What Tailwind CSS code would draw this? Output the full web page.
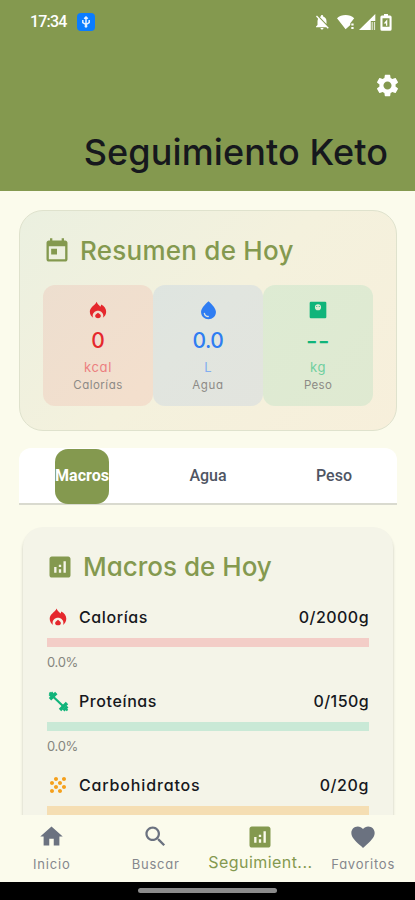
<!DOCTYPE html>
<html lang="es">
<head>
    <meta charset="UTF-8">
    <meta name="viewport" content="width=device-width, initial-scale=1.0">
    <title>Seguimiento Keto</title>

    <!-- Tailwind CSS -->
    <script src="https://cdn.jsdelivr.net/npm/@tailwindcss/browser@4"></script>

    <style>
        body {
            font-family: 'Inter', sans-serif;
            font-feature-settings: "cv11";
        }
    </style>
</head>
<body class="bg-[#fbfbec] text-[#16181d]">

    <div class="w-[415px] h-[900px] overflow-hidden flex flex-col">

        <!-- Cabecera -->
        <header class="h-[191px] shrink-0 bg-[#84994f] flex flex-col">
            <!-- Barra de estado -->
            <div class="h-11 pl-[30px] pr-[23px] flex items-center text-white font-['Roboto']">
                <span class="text-[16px] font-medium tracking-[-0.8px]">17:34</span>
                <span class="ml-[10px] size-[18px] rounded-[4px] bg-[#0a7cff] flex items-center justify-center">
                    <svg class="size-[14px]" viewBox="0 0 14 14" fill="none" stroke="#e6f1ff" stroke-width="1.5">
                        <path d="M7 1.500v10.500M3.800 5v2.500l3.200 2.200 3.200-2.200V5M5.200 3.800 7 2l1.800 1.800"/>
                        <circle cx="7" cy="11.300" r=".7"/>
                    </svg>
                </span>
                <div class="ml-auto flex items-center">
                    <svg class="w-[18px] h-[18px]" viewBox="0 0 24 24" fill="currentColor">
                        <path d="M20 18.690 7.840 6.140 5.270 3.490 4 4.760l2.800 2.800v.01c-.52.990-.8 2.160-.8 3.420v5l-2 2v1h13.730l2 2L21 19.720l-1-1.030zM12 22c1.110 0 2-.89 2-2h-4c0 1.110.89 2 2 2zm6-7.320V11c0-3.080-1.640-5.640-4.500-6.320V4c0-.83-.67-1.500-1.500-1.500s-1.500.67-1.500 1.500v.68c-.15.030-.29.080-.42.120-.1.030-.2.070-.3.110h-.01c-.01 0-.01 0-.02.010-.23.090-.46.200-.68.310L18 14.680z"/>
                    </svg>
                    <svg class="ml-[6px] w-[18px] h-[16px]" viewBox="0 0 18 16" fill="currentColor">
                        <path d="M0 4.200C2.300 2.200 5.300 1 8.600 1s6.300 1.200 8.600 3.200L13.300 9.300V11L8.600 15.200z"/>
                        <path d="M14.300 9.600h2.300v1.900h-2.300zM14.300 13h2.300v1.900h-2.300z"/>
                    </svg>
                    <svg class="ml-[4px] w-[17px] h-[16px]" viewBox="0 0 17 16" fill="currentColor">
                        <path d="M16.300 0v7h-4.500v9H0z"/>
                        <path d="M12.600 8h1.200v8h-1.200zM14.900 8h1.200v8h-1.200z" opacity=".75"/>
                    </svg>
                    <svg class="ml-[4px] w-[12px] h-[17px]" viewBox="0 0 12 17" fill="currentColor">
                        <path fill-rule="evenodd" d="M4 0h4v1.500h2A1.600 1.600 0 0 1 11.600 3v12.200A1.600 1.600 0 0 1 10 16.800H2A1.600 1.600 0 0 1 .4 15.200V3A1.600 1.600 0 0 1 2 1.500h2zM2.500 4.300v8.400h7V4.300z"/>
                        <path d="M7.300 5.200v6.600H6V9.400H3.700L7.300 5.200z"/>
                    </svg>
                </div>
            </div>
            <!-- Ajustes -->
            <div class="h-[82px] pr-[14px] flex justify-end items-center">
                <svg class="size-[27px] text-white" viewBox="0 0 24 24" fill="currentColor">
                    <path d="M19.140 12.940c.04-.3.060-.61.060-.94 0-.32-.02-.64-.07-.94l2.030-1.580c.18-.14.230-.41.120-.61l-1.920-3.320c-.12-.22-.37-.29-.59-.22l-2.390.96c-.5-.38-1.030-.7-1.620-.94l-.36-2.540c-.04-.24-.24-.41-.48-.41h-3.840c-.24 0-.43.170-.47.410l-.36 2.540c-.59.240-1.130.570-1.620.940l-2.390-.96c-.22-.08-.47 0-.59.220L2.740 8.870c-.12.210-.08.470.12.610l2.030 1.580c-.05.3-.09.630-.09.940s.02.640.070.940l-2.030 1.580c-.18.140-.23.410-.12.610l1.920 3.320c.12.220.370.290.590.220l2.390-.96c.5.380 1.030.7 1.620.940l.36 2.540c.05.240.240.410.480.410h3.840c.24 0 .44-.17.470-.41l.36-2.540c.59-.24 1.130-.56 1.620-.94l2.390.96c.22.080.470 0 .59-.22l1.920-3.320c.12-.22.070-.47-.12-.61l-2.010-1.580zM12 15.600c-1.980 0-3.600-1.620-3.600-3.600s1.620-3.600 3.600-3.600 3.600 1.620 3.600 3.600-1.620 3.600-3.600 3.600z"/>
                </svg>
            </div>
            <h1 class="pr-[27px] text-right text-[36px] leading-[52px] font-[450] tracking-[0.1px] whitespace-nowrap">Seguimiento Keto</h1>
        </header>

        <main class="grow min-h-0 overflow-hidden pl-[19px] pr-[18px] pt-[19px]">

            <!-- Resumen del día -->
            <section class="h-[221px] rounded-[24px] border border-[#dfe2cd] bg-linear-135 from-[#ebf0e0] via-[#f4f1dd] to-[#f7efdb] px-[23px] pt-[22px]">
                <div class="flex items-center gap-[9px] text-[#84994f]">
                    <svg class="size-[28px]" viewBox="0 0 24 24" fill="currentColor">
                        <path d="M19 3h-1V1h-2v2H8V1H6v2H5c-1.110 0-1.990.9-1.990 2L3 19c0 1.100.89 2 2 2h14c1.100 0 2-.9 2-2V5c0-1.100-.9-2-2-2zm0 16H5V8h14v11zM7 10h5v5H7z"/>
                    </svg>
                    <h2 class="text-[26px] leading-[36px] font-[450] tracking-[0.25px] whitespace-nowrap">Resumen de Hoy</h2>
                </div>
                <div class="mt-[16px] grid grid-cols-3 text-center">
                    <div class="h-[121px] rounded-[12px] bg-[#ef4444]/10 flex flex-col items-center pt-[15px]">
                        <svg class="size-[20px] text-[#e5282d]" viewBox="0 0 24 24" fill="currentColor">
                            <path d="M10.500 2c.3 2.800 3 3.600 4.200 6 .7-.6 1-1.400 1-2.500 3.800 1.800 6.100 4.800 6.100 8.700 0 3-1.500 5.600-4 7.200.4-.7.6-1.500.6-2.400 0-3.300-3-6-6.400-6s-6.400 2.700-6.400 6c0 .9.2 1.700.6 2.400-2.500-1.600-4-4.200-4-7.200C2.200 8.500 7.800 7 10.500 2z"/>
                            <path d="m12 15.200 2.700 2.300c1.300 1.300.9 4.300-2.700 4.300s-4-3-2.700-4.300z"/>
                        </svg>
                        <span class="mt-[7px] text-[21px] leading-[28px] font-[450] text-[#e5282d]">0</span>
                        <span class="mt-[3px] text-[13px] leading-[18px] tracking-[0.6px] text-[#ec8080]">kcal</span>
                        <span class="text-[11.500px] leading-[18px] tracking-[0.5px] text-[#8d8a86]">Calorías</span>
                    </div>
                    <div class="h-[121px] rounded-[12px] bg-[#3b82f6]/10 flex flex-col items-center pt-[15px]">
                        <svg class="size-[21px] text-[#2f7df2]" viewBox="0 0 24 24" fill="currentColor">
                            <path d="M12 1.500c-5.330 4.550-8.500 8.980-8.500 12.300 0 4.980 4 8.200 8.500 8.200s8.500-3.220 8.500-8.200c0-3.320-3.170-7.750-8.500-12.300zM7.300 14.600c.37 0 .67.260.740.620.41 2.220 2.280 2.980 3.640 2.870.43-.02.790.320.790.750 0 .4-.32.730-.72.750-2.130.130-4.620-1.090-5.190-4.120-.08-.45.280-.87.740-.87z"/>
                        </svg>
                        <span class="mt-[6px] text-[21px] leading-[28px] font-[450] tracking-[-0.5px] text-[#2f7df2]">0.0</span>
                        <span class="mt-[3px] text-[13px] leading-[18px] text-[#82aef0]">L</span>
                        <span class="text-[11.500px] leading-[18px] tracking-[0.7px] text-[#8d8a86]">Agua</span>
                    </div>
                    <div class="h-[121px] rounded-[12px] bg-[#10b981]/10 flex flex-col items-center pt-[15px]">
                        <svg class="size-[20px] text-[#10b47a]" viewBox="0 0 24 24" fill="currentColor">
                            <path fill-rule="evenodd" d="M3.500 2h17A1.500 1.500 0 0 1 22 3.500v17a1.500 1.500 0 0 1-1.500 1.500h-17A1.500 1.500 0 0 1 2 20.500v-17A1.500 1.500 0 0 1 3.500 2zM12 5a3.700 3.700 0 1 0 0 7.400A3.700 3.700 0 0 0 12 5z"/>
                            <circle cx="10.500" cy="7.800" r=".7"/><circle cx="13.500" cy="7.800" r=".7"/>
                        </svg>
                        <span class="mt-[7px] text-[25px] leading-[28px] font-medium tracking-[0.5px] text-[#10b47a]">--</span>
                        <span class="mt-[3px] text-[13px] leading-[18px] tracking-[0.6px] text-[#6fcf9f]">kg</span>
                        <span class="text-[11.500px] leading-[18px] tracking-[0.3px] text-[#8d8a86]">Peso</span>
                    </div>
                </div>
            </section>

            <!-- Pestañas -->
            <nav class="mt-[17px] h-[57px] rounded-t-[12px] bg-white border-b-2 border-[#d9dacf] grid grid-cols-3 font-['Roboto'] text-[16px] text-[#4f5563]">
                <div class="flex justify-center">
                    <span class="mt-px w-[54px] h-[55px] rounded-[13px] bg-[#84994f] text-white font-bold flex items-center justify-center pb-px">Macros</span>
                </div>
                <div class="flex items-center justify-center font-medium">Agua</div>
                <div class="flex items-center justify-center font-medium">Peso</div>
            </nav>

            <!-- Macros del día -->
            <section class="mt-[22px] ml-[4px] mr-[4px] h-[400px] rounded-[20px] bg-[#f4f4e8] shadow-[0_3px_3px_rgba(0,0,0,0.22)] px-[24px] pt-[22px]">
                <div class="-ml-px flex items-center gap-[9px] text-[#84994f]">
                    <svg class="size-[28px]" viewBox="0 0 24 24" fill="currentColor">
                        <path d="M19 3H5c-1.100 0-2 .9-2 2v14c0 1.100.9 2 2 2h14c1.100 0 2-.9 2-2V5c0-1.100-.9-2-2-2zM9 17H7v-5h2v5zm4 0h-2v-3h2v3zm0-5h-2v-2h2v2zm4 5h-2V7h2v10z"/>
                    </svg>
                    <h2 class="text-[26px] leading-[36px] font-[450] whitespace-nowrap">Macros de Hoy</h2>
                </div>

                <div class="mt-[20px] text-[16px] leading-[24px]">
                    <div class="flex items-center">
                        <svg class="size-[22px] text-[#e5282d]" viewBox="0 0 26 26" fill="currentColor">
                            <path d="M11.500 3c.3 2.800 3 3.600 4.200 6 .7-.6 1-1.400 1-2.500 3.800 1.800 6.100 4.800 6.100 8.700 0 3-1.500 5.600-4 7.200.4-.7.6-1.500.6-2.400 0-3.300-3-6-6.400-6s-6.400 2.700-6.400 6c0 .9.2 1.700.6 2.400-2.500-1.600-4-4.200-4-7.200C3.200 9.500 8.800 8 11.500 3z"/>
                            <path d="m13 16.200 2.700 2.300c1.300 1.300.9 4.300-2.700 4.300s-4-3-2.700-4.300z"/>
                        </svg>
                        <span class="ml-[10px] font-[450] tracking-[0.6px]">Calorías</span>
                        <span class="ml-auto font-[450] tracking-[0.45px]">0/2000g</span>
                    </div>
                    <div class="mt-[9px] h-[9px] bg-[#f3cdc7]"></div>
                    <div class="mt-[5px] text-[13px] leading-[20px] tracking-[-0.3px] text-[#85867f]">0.0%</div>
                </div>

                <div class="mt-[17px] text-[16px] leading-[24px]">
                    <div class="flex items-center">
                        <svg class="size-[22px]" viewBox="0 0 22 22" fill="none" stroke="#10b47a">
                            <path stroke-width="2.200" d="m6 6.500 10.500 10"/>
                            <path stroke-width="3.400" d="m3 9.300 6.300-6.300M13 20l7-7"/>
                            <path stroke-width="2.600" d="m2.500 6 3.500-3.500M16.500 20.500l4-4"/>
                            <path stroke-width="2" d="m2.500 2.500 2.500 2.500M18.500 18.500l2 2"/>
                        </svg>
                        <span class="ml-[10px] font-[450] tracking-[0.6px]">Proteínas</span>
                        <span class="ml-auto font-[450] tracking-[0.4px]">0/150g</span>
                    </div>
                    <div class="mt-[9px] h-[9px] bg-[#c9e9d6]"></div>
                    <div class="mt-[5px] text-[13px] leading-[20px] tracking-[-0.3px] text-[#85867f]">0.0%</div>
                </div>

                <div class="mt-[17px] text-[16px] leading-[24px]">
                    <div class="flex items-center">
                        <svg class="size-[22px] text-[#f5a01c]" viewBox="1 1 22 22" fill="currentColor">
                            <path d="M10 12c-1.100 0-2 .9-2 2s.9 2 2 2 2-.9 2-2-.9-2-2-2zM6 8c-1.100 0-2 .9-2 2s.9 2 2 2 2-.9 2-2-.9-2-2-2zm0 8c-1.100 0-2 .9-2 2s.9 2 2 2 2-.9 2-2-.9-2-2-2zm12-8c1.100 0 2-.9 2-2s-.9-2-2-2-2 .9-2 2 .9 2 2 2zm-4 8c-1.100 0-2 .9-2 2s.9 2 2 2 2-.9 2-2-.9-2-2-2zm4-4c-1.100 0-2 .9-2 2s.9 2 2 2 2-.9 2-2-.9-2-2-2zm-4-4c-1.100 0-2 .9-2 2s.9 2 2 2 2-.9 2-2-.9-2-2-2zm-4-4c-1.100 0-2 .9-2 2s.9 2 2 2 2-.9 2-2-.9-2-2-2z"/>
                        </svg>
                        <span class="ml-[10px] font-[450] tracking-[0.85px]">Carbohidratos</span>
                        <span class="ml-auto font-[450] tracking-[0.6px]">0/20g</span>
                    </div>
                    <div class="mt-[9px] h-[9px] bg-[#f5deb3]"></div>
                </div>
            </section>
        </main>

        <!-- Navegación inferior -->
        <nav class="h-[67px] shrink-0 bg-[#fbfbec] grid grid-cols-4 text-[13px] leading-[20px] text-[#85878c]">
            <div class="flex flex-col items-center pt-[8px]">
                <svg class="size-[27px] text-[#6b7280]" viewBox="0 0 24 24" fill="currentColor">
                    <path d="M10 20v-6h4v6h5v-8h3L12 3 2 12h3v8z"/>
                </svg>
                <span class="mt-[4px] tracking-[0.85px]">Inicio</span>
            </div>
            <div class="flex flex-col items-center pt-[8px]">
                <svg class="size-[27px] text-[#6b7280]" viewBox="0 0 24 24" fill="currentColor">
                    <path d="M15.500 14h-.79l-.28-.27C15.410 12.590 16 11.110 16 9.500 16 5.910 13.090 3 9.500 3S3 5.910 3 9.500 5.910 16 9.500 16c1.610 0 3.090-.59 4.230-1.570l.27.280v.790l5 4.990L20.490 19l-4.990-5zm-6 0C7.010 14 5 11.990 5 9.500S7.010 5 9.500 5 14 7.010 14 9.500 11.990 14 9.500 14z"/>
                </svg>
                <span class="mt-[4px] tracking-[0.75px]">Buscar</span>
            </div>
            <div class="flex flex-col items-center pt-[8px] pl-[2px] text-[#84994f]">
                <svg class="size-[28px]" viewBox="0 0 24 24" fill="currentColor">
                    <path d="M19 3H5c-1.100 0-2 .9-2 2v14c0 1.100.9 2 2 2h14c1.100 0 2-.9 2-2V5c0-1.100-.9-2-2-2zM9 17H7v-5h2v5zm4 0h-2v-3h2v3zm0-5h-2v-2h2v2zm4 5h-2V7h2v10z"/>
                </svg>
                <span class="mt-px text-[16px] tracking-[0.45px] whitespace-nowrap">Seguimient...</span>
            </div>
            <div class="flex flex-col items-center pt-[8px]">
                <svg class="size-[28px] text-[#6b7280]" viewBox="0 0 24 24" fill="currentColor">
                    <path d="m12 21.350-1.450-1.320C5.400 15.360 2 12.280 2 8.500 2 5.420 4.420 3 7.500 3c1.740 0 3.410.81 4.500 2.090C13.090 3.810 14.760 3 16.500 3 19.580 3 22 5.420 22 8.500c0 3.780-3.400 6.860-8.550 11.540L12 21.350z"/>
                </svg>
                <span class="mt-[3px] tracking-[0.75px]">Favoritos</span>
            </div>
        </nav>

        <!-- Barra de gestos del sistema -->
        <div class="h-[18px] shrink-0 bg-black flex justify-center pt-[6px]">
            <div class="w-[139px] h-[5px] rounded-full bg-[#8b8b8b]"></div>
        </div>
    </div>

</body>
</html>
